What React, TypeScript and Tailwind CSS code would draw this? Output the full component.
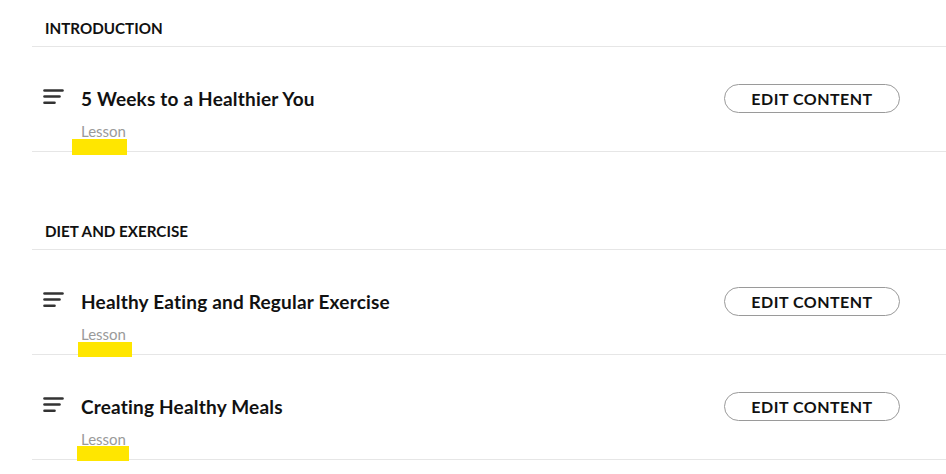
import React from 'react'

interface Lesson {
  title: string
  markLeft: number
  markTop: number
  markWidth: number
  markHeight: number
}

interface Section {
  name: string
  lessons: Lesson[]
}

const sections: Section[] = [
  {
    name: 'INTRODUCTION',
    lessons: [{ title: '5 Weeks to a Healthier You', markLeft: 40, markTop: 92, markWidth: 55, markHeight: 16 }]
  },
  {
    name: 'DIET AND EXERCISE',
    lessons: [
      { title: 'Healthy Eating and Regular Exercise', markLeft: 46, markTop: 92, markWidth: 54, markHeight: 15 },
      { title: 'Creating Healthy Meals', markLeft: 45, markTop: 91, markWidth: 52, markHeight: 15 }
    ]
  }
]

function LinesIcon() {
  return (
    <svg width="22" height="18" viewBox="0 0 22 18" className="shrink-0">
      <g stroke="#333333" strokeWidth="2.6" strokeLinecap="round">
        <line x1="1.5" y1="2.5" x2="19.5" y2="2.5" />
        <line x1="1.5" y1="8.5" x2="16.5" y2="8.5" />
        <line x1="1.5" y1="14.8" x2="11.5" y2="14.8" />
      </g>
    </svg>
  )
}

function LessonRow({ lesson }: { lesson: Lesson }) {
  return (
    <div className="relative flex h-[105px] items-start border-b border-[#e6e6e6] pl-[11px] pr-[46px] pt-[37px]">
      <div className="mt-[4px] w-[38px]">
        <LinesIcon />
      </div>
      <div className="flex-1 pt-[3px]">
        <div className="text-[19px] font-bold leading-[24px] tracking-[0.2px] text-[#111111]">{lesson.title}</div>
        <div className="mt-[11px] text-[15px] leading-[18px] text-[#9a9a9a]">Lesson</div>
      </div>
      <button className="h-[29px] w-[176px] rounded-full border border-[#9a9a9a] bg-white text-[16px] font-bold leading-[18px] tracking-[0.5px] text-[#111111]">
        EDIT CONTENT
      </button>
      {/* highlight marker over the lesson label */}
      <div
        className="absolute bg-[#ffe600]"
        style={{ left: lesson.markLeft, top: lesson.markTop, width: lesson.markWidth, height: lesson.markHeight }}
      />
    </div>
  )
}

export default function App() {
  return (
    <div className="min-h-[474px] w-[946px] bg-white pl-[32px]" style={{ fontFamily: 'Lato, "Noto Sans", sans-serif' }}>
      {sections.map((section, i) => (
        <div key={section.name} className={i > 0 ? 'mt-[51px]' : ''}>
          <div className="h-[47px] border-b border-[#e6e6e6] pl-[13px] pt-[20px] text-[15.2px] font-bold leading-[17px] text-[#111111]">
            {section.name}
          </div>
          {section.lessons.map((lesson) => (
            <LessonRow key={lesson.title} lesson={lesson} />
          ))}
        </div>
      ))}
    </div>
  )
}
